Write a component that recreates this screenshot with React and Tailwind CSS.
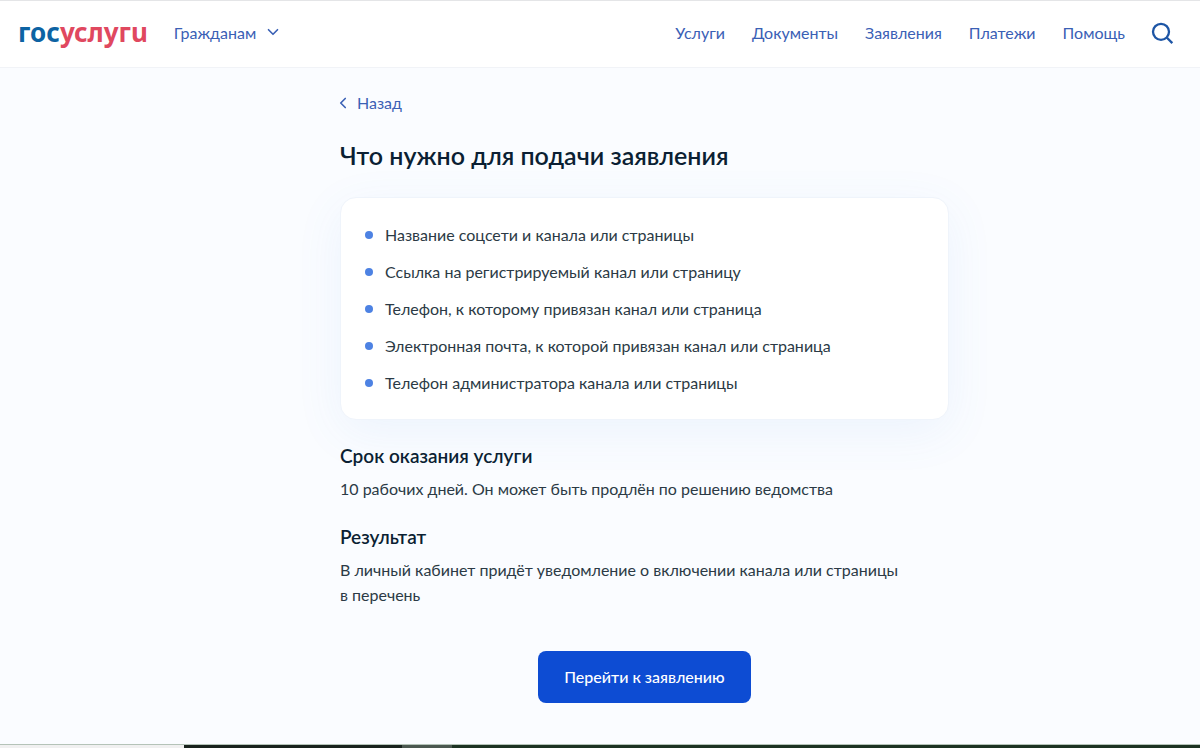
import { ChevronDown, ChevronLeft } from 'lucide-react';

const navLinks = ['Услуги', 'Документы', 'Заявления', 'Платежи', 'Помощь'];

const requirements = [
  'Название соцсети и канала или страницы',
  'Ссылка на регистрируемый канал или страницу',
  'Телефон, к которому привязан канал или страница',
  'Электронная почта, к которой привязан канал или страница',
  'Телефон администратора канала или страницы',
];

function Header() {
  return (
    <header className="flex h-[68px] items-center border-t border-b border-t-[#e4e5e7] border-b-[#f1f3f7] bg-white pb-1 pl-[18px] pr-[26px] text-[#3a60b5]">
      <a href="#" className="font-['Noto_Sans',sans-serif] text-[26px] leading-8 font-bold text-[#0d63a3]">
        гос<span className="text-[#e0485f]">услугu</span>
      </a>
      <button type="button" className="ml-[26px] flex items-center gap-2">
        Гражданам
        <ChevronDown size={18} strokeWidth={2.2} />
      </button>
      <nav className="ml-auto flex items-center gap-[27px]">
        {navLinks.map((label) => (
          <a key={label} href="#">
            {label}
          </a>
        ))}
      </nav>
      <button type="button" aria-label="Поиск" className="ml-[25px] text-[#1d55a5]">
        <svg width="24" height="24" viewBox="0 0 24 24" fill="none" stroke="currentColor" strokeWidth="2.3">
          <circle cx="11" cy="11.8" r="8" />
          <path d="M16.7 17.5L22.3 23.1" />
        </svg>
      </button>
    </header>
  );
}

function InfoBlock({ title, children }) {
  return (
    <section className="mt-6">
      <h2 className="text-[19px] leading-6 font-semibold text-[#0b1f33]">{title}</h2>
      <p className="mt-2">{children}</p>
    </section>
  );
}

function App() {
  return (
    <div className="flex min-h-screen flex-col bg-[#fafcff] font-[Lato,sans-serif] text-[16px] leading-[25px] text-[#2b3a45]">
      <Header />

      <main className="flex-1 pl-[89px]">
        <div className="mx-auto max-w-[609px] pt-[22px] pb-10">
          <a href="#" className="flex items-center gap-[5px] text-[#3a60b5]">
            <ChevronLeft size={18} strokeWidth={2.2} className="-ml-[6px]" />
            Назад
          </a>
          <h1 className="mt-6 text-[25px] leading-8 font-semibold text-[#0b1f33]">Что нужно для подачи заявления</h1>

          <ul className="mt-[26px] space-y-3 rounded-2xl border border-[#eff4fb] bg-white p-6 shadow-[0_12px_48px_rgba(80,140,230,0.08)]">
            {requirements.map((item) => (
              <li key={item} className="flex items-center gap-3">
                <span className="h-2 w-2 rounded-full bg-[#4d82e3]" />
                {item}
              </li>
            ))}
          </ul>

          <InfoBlock title="Срок оказания услуги">10 рабочих дней. Он может быть продлён по решению ведомства</InfoBlock>
          <InfoBlock title="Результат">
            В личный кабинет придёт уведомление о включении канала или страницы в&nbsp;перечень
          </InfoBlock>

          <div className="mt-11 flex justify-center">
            <button type="button" className="rounded-lg bg-[#0d4cd3] px-[26px] py-[14px] leading-6 font-medium text-white">
              Перейти к заявлению
            </button>
          </div>
        </div>
      </main>

      {/* Taskbar edge */}
      <div className="flex h-1 border-t border-[#b4c3b8]">
        <div className="w-[184px] bg-[#f0f0f0]" />
        <div className="w-[218px] bg-[#18221d]" />
        <div className="w-[50px] bg-[#4b5850]" />
        <div className="flex-1 bg-[#1c3323]" />
      </div>
    </div>
  );
}

export default App;
